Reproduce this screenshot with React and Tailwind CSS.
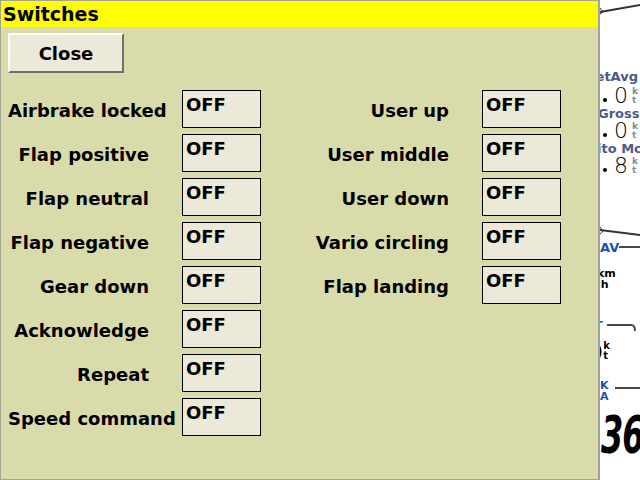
import React from 'react';

const leftSwitches = [
  'Airbrake locked',
  'Flap positive',
  'Flap neutral',
  'Flap negative',
  'Gear down',
  'Acknowledge',
  'Repeat',
  'Speed command',
];

const rightSwitches = ['User up', 'User middle', 'User down', 'Vario circling', 'Flap landing'];

const SwitchRow = ({ label }) => (
  <div className="flex items-center h-[38px]">
    <div className="w-[141px] shrink-0 pt-[2px] text-right whitespace-nowrap text-[18px] font-bold text-black">
      {label}
    </div>
    <div className="ml-[33px] w-[79px] h-[38px] shrink-0 border border-black bg-[#ece9d8] pl-[3px] pt-[3px] text-[18px] font-bold leading-[21px] text-black">
      OFF
    </div>
  </div>
);

const Bracket = ({ className }) => (
  <svg className={className} width="30" height="10" viewBox="0 0 30 10">
    <path d="M0 2 H24 Q28 2 28 8" fill="none" stroke="#4a4a4a" strokeWidth="2" />
  </svg>
);

// reading on the map behind the dialog: dot, thin digit, small unit
const Reading = ({ digit }) => (
  <div className="flex items-center h-[20px]">
    <div className="ml-[3px] w-[4px] h-[4px] mt-[8px] rounded-full bg-black" />
    <div className="ml-[7px] text-[22px] font-extralight leading-[22px] text-black">{digit}</div>
    <div className="ml-[4px] text-[9px] leading-[9px] text-[#8a8a8a]">k<br />t</div>
  </div>
);

const MapStrip = () => (
  <div className="relative flex-1 h-full overflow-hidden bg-white font-bold" style={{ fontFamily: '"DejaVu Sans", sans-serif' }}>
    <svg className="absolute left-0 top-[2px]" width="40" height="14" viewBox="0 0 40 14">
      <path d="M0 10 L40 3" stroke="#333" strokeWidth="2" />
      <path d="M0 6 L3 10 L0 12" fill="none" stroke="#333" strokeWidth="1" />
    </svg>

    <div className="absolute right-0 top-[69px] w-[60px] flex flex-col items-end whitespace-nowrap">
      <div className="mr-[2px] text-[13px] leading-[15px] text-[#4c5a86]">NetAvg</div>
    </div>
    <div className="absolute left-0 top-[86px] w-[40px] flex flex-col whitespace-nowrap">
      <Reading digit="0" />
      <div className="ml-[-2px] text-[13px] leading-[15px] text-[#4c5a86]">Gross</div>
      <Reading digit="0" />
      <div className="ml-[-3px] text-[13px] leading-[15px] text-[#4c5a86]">ito Mc</div>
      <Reading digit="8" />
    </div>

    <svg className="absolute left-0 top-[226px]" width="40" height="12" viewBox="0 0 40 12">
      <path d="M0 4 L40 9" stroke="#333" strokeWidth="2" />
      <path d="M0 1 L3 5 L0 8" fill="none" stroke="#333" strokeWidth="1" />
    </svg>

    <div className="absolute left-0 top-[240px] flex items-start">
      <div className="text-[13px] leading-[16px] text-[#1650b4]">AV</div>
      <Bracket className="mt-[5px]" />
    </div>
    <div className="absolute left-[-3px] top-[268px] text-[11px] leading-[11px] text-black">km<br />&nbsp;h</div>

    <div className="absolute left-[-6px] top-[318px] flex items-start">
      <div className="text-[13px] leading-[16px] text-[#1a7ad8]">T</div>
      <Bracket className="mt-[5px] ml-[4px]" />
    </div>
    <div className="absolute left-[-6px] top-[340px] flex items-center">
      <div className="text-[20px] leading-[22px] text-black">)</div>
      <div className="text-[10px] leading-[10px] text-black">k<br />t</div>
    </div>

    <div className="absolute left-0 top-[380px] flex items-start">
      <div className="text-[11px] leading-[11px] text-[#1650b4]">K<br />A</div>
      <Bracket className="mt-[6px] ml-[6px]" />
    </div>
    <div className="absolute left-[1px] top-[410px] origin-top scale-y-[1.6] text-[32px] italic leading-[32px] tracking-[-1px] text-black">36</div>
  </div>
);

export default function App() {
  return (
    <div
      className="w-[640px] h-[480px] flex overflow-hidden bg-white"
      style={{ fontFamily: '"DejaVu Sans", "Liberation Sans", sans-serif' }}
    >
      {/* Dialog */}
      <div className="w-[600px] h-full shrink-0 flex flex-col border border-r-2 border-[#a4a494] bg-[#dadbab]">
        <div className="h-[26px] bg-[#ffff00] pl-[2px] text-[19px] font-bold leading-[26px] text-black">Switches</div>

        <div className="pl-[7px] pt-[6px]">
          <button className="w-[116px] h-[40px] border-2 border-t-white border-l-white border-b-[#6e6e6e] border-r-[#6e6e6e] bg-[#ece9d8] text-[18px] font-bold text-black">
            Close
          </button>
        </div>

        <div className="flex pl-[7px] pt-[17px]">
          <div className="w-[300px] flex flex-col gap-[6px]">
            {leftSwitches.map((label) => (
              <SwitchRow key={label} label={label} />
            ))}
          </div>
          <div className="w-[280px] flex flex-col gap-[6px]">
            {rightSwitches.map((label) => (
              <SwitchRow key={label} label={label} />
            ))}
          </div>
        </div>
      </div>

      <MapStrip />
    </div>
  );
}
